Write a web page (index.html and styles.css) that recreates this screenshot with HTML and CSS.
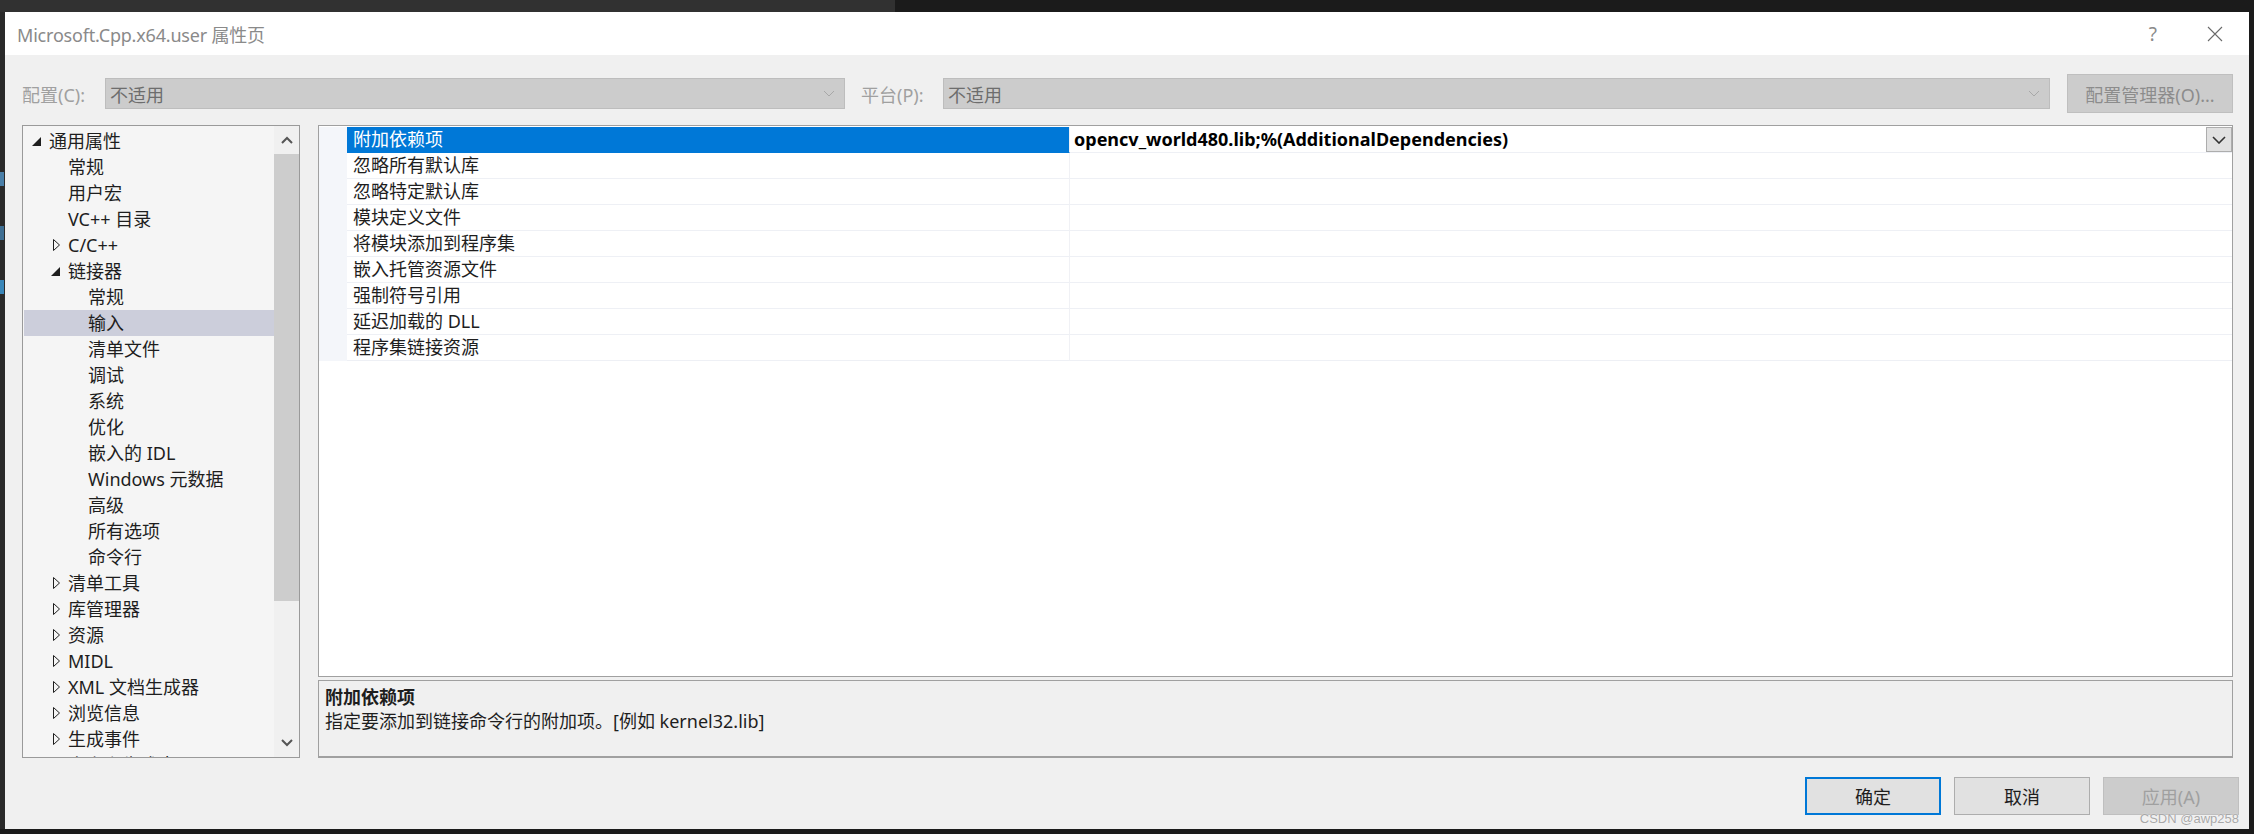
FILE: index.html
```html
<!DOCTYPE html>
<html lang="zh-CN">
<head>
<meta charset="utf-8">
<title>Microsoft.Cpp.x64.user 属性页</title>
<link rel="stylesheet" href="styles.css">
</head>
<body>
<div class="editor-top"><div class="editor-top-left"></div></div>
<div class="stage">
  <div class="editor-left"><span class="code-bit c1"></span><span class="code-bit c2"></span><span class="code-bit c3"></span></div>
  <div class="dialog">
    <div class="titlebar">
      <span class="title">Microsoft.Cpp.x64.user 属性页</span>
      <span class="title-actions">
        <span class="help">?</span>
        <svg class="close" width="16" height="16" viewBox="0 0 16 16"><path d="M1 1L15 15M15 1L1 15" stroke="#6a6a6a" stroke-width="1.1" fill="none"/></svg>
      </span>
    </div>
    <div class="dialog-body">
      <div class="config-row">
        <span class="lbl lbl-config">配置(C):</span>
        <div class="combo combo-config"><span class="combo-text">不适用</span><svg width="12" height="7" viewBox="0 0 12 7"><path d="M1 1L6 6L11 1" stroke="#a8a8a8" fill="none"/></svg></div>
        <span class="lbl lbl-platform">平台(P):</span>
        <div class="combo combo-platform"><span class="combo-text">不适用</span><svg width="12" height="7" viewBox="0 0 12 7"><path d="M1 1L6 6L11 1" stroke="#a8a8a8" fill="none"/></svg></div>
        <div class="btn-mgr">配置管理器(O)...</div>
      </div>
      <div class="main">
        <div class="tree">
          <ul class="tree-list">
            <li class="ti l0"><span class="arr"><svg width="9" height="9" viewBox="0 0 9 9"><path d="M9 0V9H0Z" fill="#1e1e1e"/></svg></span>通用属性</li>
            <li class="ti l1"><span class="arr"></span>常规</li>
            <li class="ti l1"><span class="arr"></span>用户宏</li>
            <li class="ti l1"><span class="arr"></span>VC++ 目录</li>
            <li class="ti l1"><span class="arr"><svg class="col" width="7" height="12" viewBox="0 0 7 12"><path d="M0.5 0.5L6.5 6L0.5 11.5Z" fill="none" stroke="#1e1e1e"/></svg></span>C/C++</li>
            <li class="ti l1"><span class="arr"><svg width="9" height="9" viewBox="0 0 9 9"><path d="M9 0V9H0Z" fill="#1e1e1e"/></svg></span>链接器</li>
            <li class="ti l2"><span class="arr"></span>常规</li>
            <li class="ti l2 sel"><span class="arr"></span>输入</li>
            <li class="ti l2"><span class="arr"></span>清单文件</li>
            <li class="ti l2"><span class="arr"></span>调试</li>
            <li class="ti l2"><span class="arr"></span>系统</li>
            <li class="ti l2"><span class="arr"></span>优化</li>
            <li class="ti l2"><span class="arr"></span>嵌入的 IDL</li>
            <li class="ti l2"><span class="arr"></span>Windows 元数据</li>
            <li class="ti l2"><span class="arr"></span>高级</li>
            <li class="ti l2"><span class="arr"></span>所有选项</li>
            <li class="ti l2"><span class="arr"></span>命令行</li>
            <li class="ti l1"><span class="arr"><svg class="col" width="7" height="12" viewBox="0 0 7 12"><path d="M0.5 0.5L6.5 6L0.5 11.5Z" fill="none" stroke="#1e1e1e"/></svg></span>清单工具</li>
            <li class="ti l1"><span class="arr"><svg class="col" width="7" height="12" viewBox="0 0 7 12"><path d="M0.5 0.5L6.5 6L0.5 11.5Z" fill="none" stroke="#1e1e1e"/></svg></span>库管理器</li>
            <li class="ti l1"><span class="arr"><svg class="col" width="7" height="12" viewBox="0 0 7 12"><path d="M0.5 0.5L6.5 6L0.5 11.5Z" fill="none" stroke="#1e1e1e"/></svg></span>资源</li>
            <li class="ti l1"><span class="arr"><svg class="col" width="7" height="12" viewBox="0 0 7 12"><path d="M0.5 0.5L6.5 6L0.5 11.5Z" fill="none" stroke="#1e1e1e"/></svg></span>MIDL</li>
            <li class="ti l1"><span class="arr"><svg class="col" width="7" height="12" viewBox="0 0 7 12"><path d="M0.5 0.5L6.5 6L0.5 11.5Z" fill="none" stroke="#1e1e1e"/></svg></span>XML 文档生成器</li>
            <li class="ti l1"><span class="arr"><svg class="col" width="7" height="12" viewBox="0 0 7 12"><path d="M0.5 0.5L6.5 6L0.5 11.5Z" fill="none" stroke="#1e1e1e"/></svg></span>浏览信息</li>
            <li class="ti l1"><span class="arr"><svg class="col" width="7" height="12" viewBox="0 0 7 12"><path d="M0.5 0.5L6.5 6L0.5 11.5Z" fill="none" stroke="#1e1e1e"/></svg></span>生成事件</li>
            <li class="ti l1"><span class="arr"><svg class="col" width="7" height="12" viewBox="0 0 7 12"><path d="M0.5 0.5L6.5 6L0.5 11.5Z" fill="none" stroke="#1e1e1e"/></svg></span>自定义生成步骤</li>
          </ul>
          <div class="vscroll">
            <div class="sb-btn"><svg width="12" height="8" viewBox="0 0 12 8"><path d="M1 7L6 2L11 7" stroke="#555" stroke-width="2" fill="none"/></svg></div>
            <div class="sb-track"><div class="sb-thumb"></div></div>
            <div class="sb-btn"><svg width="12" height="8" viewBox="0 0 12 8"><path d="M1 1L6 6L11 1" stroke="#555" stroke-width="2" fill="none"/></svg></div>
          </div>
        </div>
        <div class="right">
          <div class="grid">
            <div class="prow sel">
              <span class="gut"></span>
              <span class="pname">附加依赖项</span>
              <span class="pval"><b>opencv_world480.lib;%(AdditionalDependencies)</b><span class="dd"><svg width="14" height="8" viewBox="0 0 14 8"><path d="M1 1L7 7L13 1" stroke="#333" stroke-width="1.6" fill="none"/></svg></span></span>
            </div>
            <div class="prow"><span class="gut"></span><span class="pname">忽略所有默认库</span><span class="pval"></span></div>
            <div class="prow"><span class="gut"></span><span class="pname">忽略特定默认库</span><span class="pval"></span></div>
            <div class="prow"><span class="gut"></span><span class="pname">模块定义文件</span><span class="pval"></span></div>
            <div class="prow"><span class="gut"></span><span class="pname">将模块添加到程序集</span><span class="pval"></span></div>
            <div class="prow"><span class="gut"></span><span class="pname">嵌入托管资源文件</span><span class="pval"></span></div>
            <div class="prow"><span class="gut"></span><span class="pname">强制符号引用</span><span class="pval"></span></div>
            <div class="prow"><span class="gut"></span><span class="pname">延迟加载的 DLL</span><span class="pval"></span></div>
            <div class="prow"><span class="gut"></span><span class="pname">程序集链接资源</span><span class="pval"></span></div>
          </div>
          <div class="desc">
            <div class="desc-title">附加依赖项</div>
            <div class="desc-text">指定要添加到链接命令行的附加项。[例如 kernel32.lib]</div>
          </div>
        </div>
      </div>
      <div class="footer">
        <div class="btn btn-default">确定</div>
        <div class="btn">取消</div>
        <div class="btn btn-disabled">应用(A)</div>
      </div>
    </div>
    <div class="watermark">CSDN @awp258</div>
  </div>
  <div class="editor-right"></div>
</div>
</body>
</html>
```

FILE: styles.css
```css
* { box-sizing: border-box; }
html, body { margin: 0; padding: 0; }
body {
  width: 2254px;
  height: 834px;
  overflow: hidden;
  background: #1b1b1b;
  font-family: "Noto Sans", "Noto Sans CJK SC", sans-serif;
  font-size: 18px;
  color: #1e1e1e;
}
.editor-top { height: 12px; background: #1b1b1b; display: flex; }
.editor-top-left { width: 895px; background: #313131; }
.stage { display: flex; height: 817px; }
.editor-left {
  width: 5px;
  background: #2a2a2a;
  display: flex;
  flex-direction: column;
  padding-top: 160px;
  gap: 40px;
}
.code-bit { display: block; width: 4px; height: 14px; }
.code-bit.c1 { background: #4a7fa8; }
.code-bit.c2 { background: #3f6f93; }
.code-bit.c3 { background: #3a86b8; }
.editor-right { width: 5px; background: #1b1b1b; }
.dialog {
  position: relative;
  width: 2244px;
  height: 817px;
  background: #f0f0f0;
  display: flex;
  flex-direction: column;
}
.titlebar {
  height: 43px;
  background: #ffffff;
  display: flex;
  align-items: center;
  justify-content: space-between;
  padding: 0 26px 0 12px;
}
.title { color: #8a8a8a; font-size: 18px; letter-spacing: -0.2px; }
.title-actions { display: flex; align-items: center; gap: 50px; }
.help { color: #8a8a8a; font-size: 19px; }
.close { display: block; }
.dialog-body { flex: 1; display: flex; flex-direction: column; }
.config-row {
  margin-top: 19px;
  height: 39px;
  display: flex;
  align-items: center;
  padding-left: 17px;
}
.lbl { color: #a0a0a0; font-size: 18px; }
.lbl-config { width: 83px; }
.lbl-platform { width: 82px; margin-left: 16px; }
.combo {
  height: 31px;
  background: #cccccc;
  border: 1px solid #bdbdbd;
  display: flex;
  align-items: center;
  justify-content: space-between;
  padding: 0 9px 0 4px;
}
.combo-text { color: #6d6d6d; }
.combo-config { width: 740px; }
.combo-platform { width: 1107px; }
.btn-mgr {
  margin-left: 17px;
  width: 166px;
  height: 39px;
  background: #cccccc;
  border: 1px solid #bfbfbf;
  color: #8c8c8c;
  display: flex;
  align-items: center;
  justify-content: center;
}
.main {
  margin-top: 12px;
  height: 633px;
  display: flex;
  padding-left: 17px;
  gap: 18px;
}
.tree {
  width: 278px;
  height: 633px;
  border: 1px solid #9a9a9a;
  background: #f5f5f5;
  display: flex;
  overflow: hidden;
}
.tree-list {
  list-style: none;
  margin: 0;
  padding: 2px 0 0 1px;
  flex: 1;
  overflow: hidden;
}
.ti {
  height: 26px;
  line-height: 26px;
  display: flex;
  align-items: center;
  white-space: nowrap;
}
.ti.l0 { padding-left: 8px; }
.ti.l1 { padding-left: 27px; }
.ti.l2 { padding-left: 47px; }
.ti.sel { background: #cccedb; }
.arr { width: 17px; height: 26px; display: flex; align-items: center; flex: none; }
.arr svg { display: block; }
.arr svg.col { margin-left: 2px; }
.vscroll {
  width: 25px;
  display: flex;
  flex-direction: column;
  background: #f0f0f0;
}
.sb-btn { height: 28px; display: flex; align-items: center; justify-content: center; }
.sb-track { flex: 1; }
.sb-thumb { height: 447px; background: #cdcdcd; }
.right {
  width: 1915px;
  display: flex;
  flex-direction: column;
  gap: 3px;
}
.grid {
  height: 552px;
  background: #ffffff;
  border: 1px solid #a0a0a0;
  padding-top: 1px;
}
.prow {
  height: 26px;
  display: grid;
  grid-template-columns: 28px 723px 1fr;
}
.prow .gut { background: #f4f6fa; }
.pname {
  line-height: 25px;
  padding-left: 6px;
  border-bottom: 1px solid #eef0f5;
  border-right: 1px solid #f0f1f5;
  white-space: nowrap;
}
.pval {
  border-bottom: 1px solid #eef0f5;
  display: flex;
  justify-content: space-between;
  align-items: flex-start;
  padding-left: 4px;
  line-height: 25px;
}
.prow.sel .pname { background: #0078d7; color: #ffffff; border-bottom-color: #0078d7; }
.pval b { font-weight: 700; color: #000; font-size: 18px; }
.dd {
  width: 26px;
  height: 25px;
  background: #e1e1e1;
  border: 1px solid #adadad;
  display: flex;
  align-items: center;
  justify-content: center;
}
.desc {
  height: 78px;
  border: 1px solid #a0a0a0;
  border-bottom-width: 2px;
  background: #f0f0f0;
  padding: 4px 6px 0;
}
.desc-title { font-weight: 700; line-height: 24px; }
.desc-text { line-height: 24px; }
.footer {
  margin-top: 19px;
  height: 38px;
  display: flex;
  justify-content: flex-end;
  gap: 13px;
  padding-right: 10px;
}
.btn {
  width: 136px;
  height: 38px;
  background: #e1e1e1;
  border: 1px solid #adadad;
  display: flex;
  align-items: center;
  justify-content: center;
  color: #1e1e1e;
}
.btn-default { border: 2px solid #0078d7; }
.btn-disabled { background: #cccccc; border-color: #bfbfbf; color: #a0a0a0; }
.watermark {
  position: absolute;
  right: 10px;
  bottom: 3px;
  font-family: "Liberation Sans", sans-serif;
  font-size: 13px;
  color: #a8a8a8;
  text-shadow: 0 0 1px #ffffff;
}
```
